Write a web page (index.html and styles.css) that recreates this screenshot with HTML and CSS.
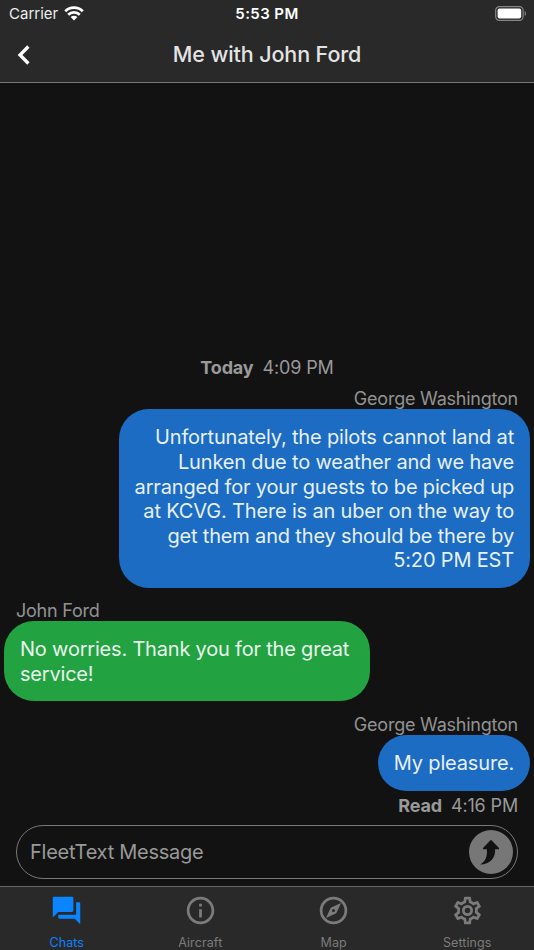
FILE: index.html
```html
<!DOCTYPE html>
<html lang="en">
<head>
<meta charset="utf-8">
<meta name="viewport" content="width=device-width, initial-scale=1">
<title>Me with John Ford</title>
<link rel="stylesheet" href="styles.css">
</head>
<body>
<div class="app">
  <header class="header">
    <div class="status">
      <div class="carrier"><span class="carrier-name">Carrier</span>
        <svg class="wifi" viewBox="0 0 20 15" width="20" height="15"><g fill="none" stroke="#fff" stroke-width="2.7"><path d="M1.2 5.3a12.6 12.6 0 0 1 17.6 0"/><path d="M4.2 8.7a8.3 8.3 0 0 1 11.6 0"/></g><path fill="#fff" d="M10 14.5 6.6 11.1a4.9 4.9 0 0 1 6.8 0z"/></svg>
      </div>
      <div class="clock">5:53 PM</div>
      <svg class="battery" viewBox="0 0 32 15" width="32" height="15"><rect x=".7" y=".7" width="27.4" height="13.6" rx="3.6" fill="none" stroke="#858585" stroke-width="1.2"/><rect x="2.6" y="2.6" width="23.6" height="9.8" rx="1.8" fill="#fff"/><path d="M29.7 5.1c1.7.6 1.7 4.2 0 4.8z" fill="#858585"/></svg>
    </div>
    <div class="title-bar">
      <svg class="back" viewBox="0 0 14 20" width="14" height="20"><path d="M11.4 1.5 3 10l8.4 8.5" fill="none" stroke="#fff" stroke-width="3.3"/></svg>
      <h1 class="title">Me with John Ford</h1>
    </div>
  </header>
  <main class="chat">
    <div class="stamp"><b>Today</b><span>4:09 PM</span></div>
    <section class="message mine">
      <div class="sender">George Washington</div>
      <div class="bubble">Unfortunately, the pilots cannot land at<br>Lunken due to weather and we have<br>arranged for your guests to be picked up<br>at KCVG. There is an uber on the way to<br>get them and they should be there by<br>5:20 PM EST</div>
    </section>
    <section class="message theirs">
      <div class="sender">John Ford</div>
      <div class="bubble">No worries. Thank you for the great<br>service!</div>
    </section>
    <section class="message mine">
      <div class="sender">George Washington</div>
      <div class="bubble">My pleasure.</div>
      <div class="receipt"><b>Read</b><span>4:16 PM</span></div>
    </section>
    <div class="composer">
      <span class="placeholder">FleetText Message</span>
      <svg class="send" viewBox="0 0 44 44" width="44" height="44"><circle cx="22" cy="22" r="22" fill="#777"/><path d="M22 9.800 30 18v1.300h-3.900c.5 8.600-4.600 14.900-15 15.300 5.600-3.200 7.300-8 6.800-15.300H14V18z" fill="#121212"/></svg>
    </div>
  </main>
  <nav class="tabs">
    <div class="tab active">
      <svg viewBox="0 0 24 24" width="33" height="33"><path d="M21 6h-2v9H6v2c0 .55.45 1 1 1h11l4 4V7c0-.55-.45-1-1-1zm-4 6V3c0-.55-.45-1-1-1H3c-.55 0-1 .45-1 1v14l4-4h10c.55 0 1-.45 1-1z"/></svg>
      <span>Chats</span>
    </div>
    <div class="tab">
      <svg viewBox="0 0 24 24" width="33" height="33"><path d="M11 7h2v2h-2zm0 4h2v6h-2zm1-9C6.480 2 2 6.480 2 12s4.480 10 10 10 10-4.480 10-10S17.520 2 12 2zm0 18c-4.410 0-8-3.590-8-8s3.590-8 8-8 8 3.590 8 8-3.590 8-8 8z"/></svg>
      <span>Aircraft</span>
    </div>
    <div class="tab">
      <svg viewBox="0 0 24 24" width="33" height="33"><path fill-rule="evenodd" d="M12 2a10 10 0 1 0 0 20 10 10 0 0 0 0-20zm0 18a8 8 0 1 1 0-16 8 8 0 0 1 0 16zM6.500 17.500l7.510-3.490L17.500 6.500 9.990 9.990zM12 10.900a1.100 1.100 0 1 1 0 2.200 1.100 1.100 0 0 1 0-2.200z"/></svg>
      <span>Map</span>
    </div>
    <div class="tab">
      <svg viewBox="0 0 24 24" width="33" height="33"><path d="M19.430 12.980c.04-.32.07-.64.07-.98s-.03-.66-.07-.98l2.110-1.650c.19-.15.24-.42.12-.64l-2-3.460c-.09-.16-.26-.25-.44-.25-.06 0-.12.010-.17.030l-2.490 1c-.52-.4-1.080-.73-1.690-.98l-.38-2.650C14.460 2.180 14.250 2 14 2h-4c-.25 0-.46.180-.49.420l-.38 2.650c-.61.250-1.170.590-1.690.98l-2.490-1c-.06-.02-.12-.03-.18-.03-.17 0-.34.090-.43.250l-2 3.460c-.13.220-.07.490.12.640l2.110 1.650c-.04.320-.07.650-.07.980s.03.660.07.980l-2.110 1.650c-.19.150-.24.420-.12.640l2 3.460c.09.160.26.250.44.250.06 0 .12-.01.170-.03l2.490-1c.52.400 1.080.730 1.690.980l.38 2.650c.03.240.24.420.49.420h4c.25 0 .46-.18.490-.42l.38-2.650c.61-.25 1.170-.59 1.690-.98l2.490 1c.06.020.12.030.18.030.17 0 .34-.09.430-.25l2-3.460c.12-.22.070-.49-.12-.64zm-1.980-1.710c.04.310.05.520.05.730s-.02.430-.05.730l-.14 1.130.89.700 1.080.840-.7 1.210-1.270-.51-1.040-.42-.9.680c-.43.320-.84.560-1.250.730l-1.060.43-.16 1.130-.2 1.350h-1.400l-.19-1.350-.16-1.130-1.060-.43c-.43-.18-.83-.41-1.230-.71l-.91-.7-1.060.43-1.270.51-.7-1.210 1.080-.84.890-.7-.14-1.130c-.03-.31-.05-.54-.05-.74s.02-.43.050-.73l.14-1.130-.89-.7-1.080-.84.700-1.210 1.270.510 1.040.420.900-.68c.43-.32.840-.56 1.250-.73l1.060-.43.160-1.130.200-1.350h1.390l.19 1.350.16 1.130 1.060.430c.43.180.83.410 1.230.710l.91.700 1.060-.43 1.270-.51.700 1.210-1.070.850-.89.700zM12 8a4 4 0 1 0 0 8 4 4 0 0 0 0-8zm0 6a2 2 0 1 1 0-4 2 2 0 0 1 0 4z"/></svg>
      <span>Settings</span>
    </div>
  </nav>
</div>
</body>
</html>
```
FILE: styles.css
```css
* { box-sizing: border-box; }
body { margin: 0; background: #121212; font-family: Inter, "Liberation Sans", sans-serif; }
.app { width: 534px; height: 950px; display: flex; flex-direction: column; overflow: hidden; }
.header { height: 83px; background: #292929; border-bottom: 1px solid #777; flex: none; }
.status { height: 28px; display: grid; grid-template-columns: 1fr auto 1fr; align-items: center; padding: 0 7px 0 9px; color: #fff; }
.carrier { display: flex; align-items: center; gap: 6px; font-size: 15px; color: #eee; }
.carrier-name { margin-top: -1px; }
.wifi { margin-top: -2px; }
.clock { font-size: 15px; font-weight: 600; letter-spacing: .4px; margin: -1px 2px 0 0; }
.battery { justify-self: end; margin-top: -2px; }
.title-bar { height: 54px; display: grid; grid-template-columns: 40px 1fr 40px; align-items: center; }
.back { margin: -1px 0 0 17px; }
.title { margin: -2px 0 0; text-align: center; font-size: 21.500px; font-weight: 550; letter-spacing: -.1px; color: #e4e4e4; white-space: nowrap; }
.chat { flex: 1; min-height: 0; display: flex; flex-direction: column; justify-content: flex-end; padding: 0 4px 7px; }
.stamp, .receipt { display: flex; gap: 9px; font-size: 18px; line-height: 22px; color: #999; letter-spacing: -.15px; white-space: nowrap; }
.stamp { justify-content: center; margin-bottom: 8px; }
.receipt { padding-right: 12px; margin-top: 4px; }
.stamp b, .receipt b { font-weight: 700; }
.message { display: flex; flex-direction: column; align-items: flex-start; }
.mine { align-items: flex-end; text-align: right; }
.sender { font-size: 18px; line-height: 22px; color: #929292; letter-spacing: -.230px; padding: 1px 12px 0; margin-bottom: -1px; white-space: nowrap; }
.bubble { background: #1b6cc2; color: #e8f0f9; border-radius: 30px; padding: 16px 16px 15px; font-size: 20px; line-height: 24.640px; letter-spacing: -.170px; white-space: nowrap; }
.theirs { margin: 11px 0 12px; }
.theirs .bubble { background: #22a241; color: #e9f6ec; padding-right: 21px; letter-spacing: -.2px; }
.composer { height: 54px; margin: 8px 12px 0; border: 1.500px solid #777; border-radius: 27px; display: flex; align-items: center; justify-content: space-between; padding: 0 4px 0 13px; flex: none; }
.placeholder { font-size: 20px; letter-spacing: -.260px; color: #999; }
.tabs { height: 64px; flex: none; display: grid; grid-template-columns: repeat(4, 1fr); background: #292929; border-top: 1px solid #666; }
.tab { display: flex; flex-direction: column; align-items: center; padding-top: 7px; font-size: 12.500px; letter-spacing: .1px; line-height: 16px; color: #7b7b7b; fill: #7b7b7b; gap: 8px; }
.tab svg { display: block; flex: none; }
.active { color: #0a84ff; fill: #0a84ff; }
```
